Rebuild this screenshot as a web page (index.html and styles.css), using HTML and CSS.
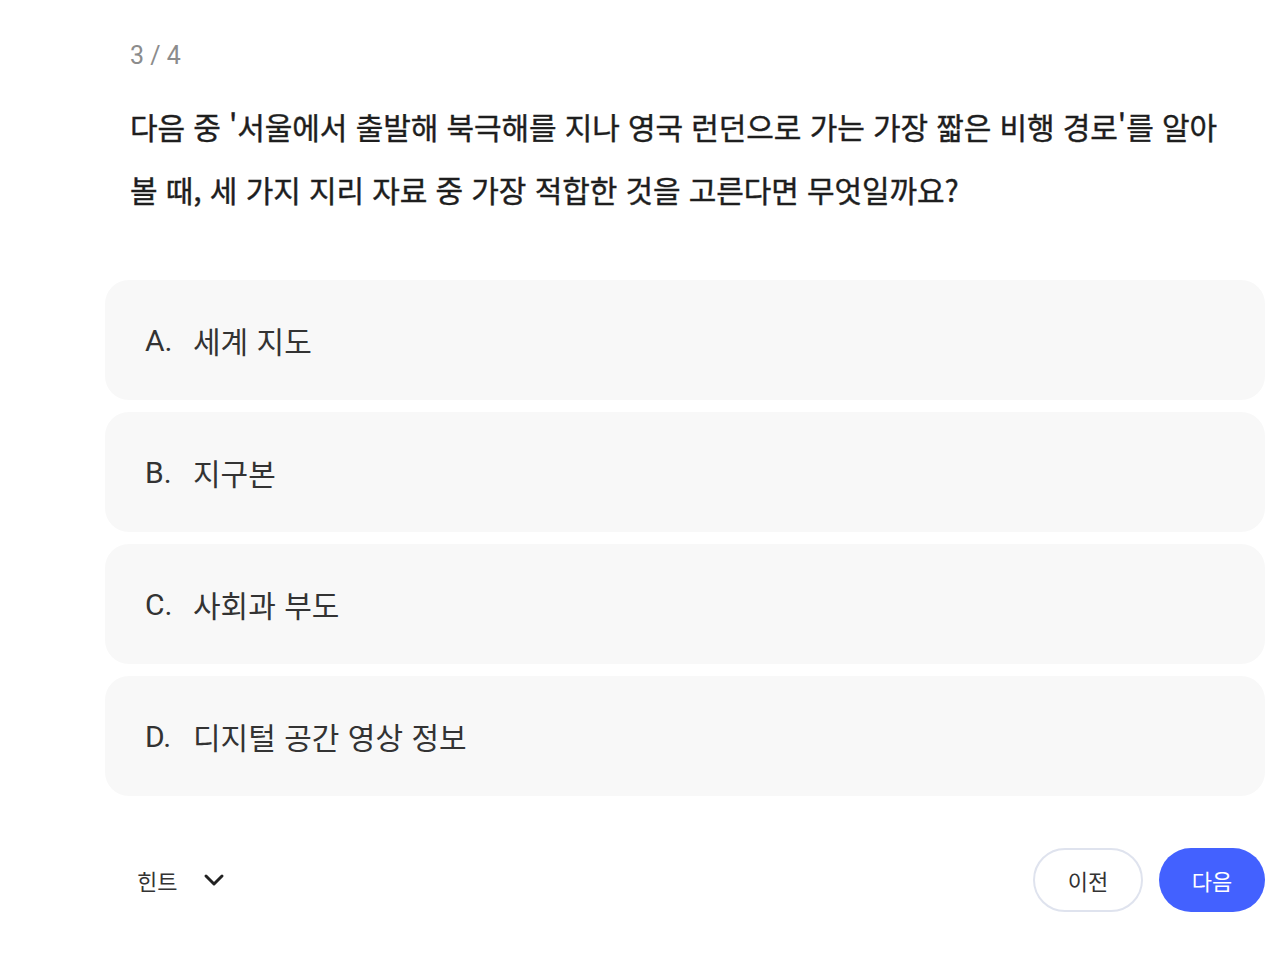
FILE: index.html
```html
<!DOCTYPE html>
<html lang="ko">
<head>
<meta charset="utf-8">
<link rel="stylesheet" href="styles.css">
</head>
<body>
<main class="quiz">
  <div class="counter">3 / 4</div>
  <p class="question">다음 중 '서울에서 출발해 북극해를 지나 영국 런던으로 가는 가장 짧은 비행 경로'를 알아 볼 때, 세 가지 지리 자료 중 가장 적합한 것을 고른다면 무엇일까요?</p>
  <ul class="options">
    <li class="option"><span class="letter">A.</span><span>세계 지도</span></li>
    <li class="option"><span class="letter">B.</span><span>지구본</span></li>
    <li class="option"><span class="letter">C.</span><span>사회과 부도</span></li>
    <li class="option"><span class="letter">D.</span><span>디지털 공간 영상 정보</span></li>
  </ul>
  <div class="footer">
    <button class="hint">힌트
      <svg class="chev" width="22" height="14" viewBox="0 0 22 14"><path d="M3 3 L11 11 L19 3" fill="none" stroke="#222" stroke-width="3" stroke-linecap="round" stroke-linejoin="round"/></svg>
    </button>
    <div class="nav">
      <button class="btn prev">이전</button>
      <button class="btn next">다음</button>
    </div>
  </div>
</main>
</body>
</html>
```
FILE: styles.css
```css
* { box-sizing: border-box; }
body {
  margin: 0;
  background: #fff;
  font-family: "Noto Sans CJK KR", "Noto Sans", sans-serif;
  color: #222;
}
.quiz {
  width: 1160px;
  margin-left: 105px;
  padding-top: 38px;
}
.counter {
  margin-left: 25px;
  font-family: Roboto, "Noto Sans CJK KR", sans-serif;
  font-size: 25px;
  line-height: 36px;
  color: #8c8c8c;
}
.question {
  margin: 21px 0 0 25px;
  width: 1108px;
  font-size: 30px;
  font-weight: 400;
  line-height: 63px;
  color: #1e1e1e;
  letter-spacing: -0.1px;
  -webkit-text-stroke: 0.4px #1e1e1e;
}
.options {
  list-style: none;
  margin: 59px 0 0;
  padding: 0;
  display: flex;
  flex-direction: column;
  gap: 12px;
}
.option {
  height: 120px;
  background: #f8f8f8;
  border-radius: 24px;
  display: flex;
  align-items: center;
  padding-left: 40px;
  font-size: 30px;
  color: #333;
}
.letter {
  width: 48px;
  font-family: Roboto, "Noto Sans CJK KR", sans-serif;
}
.footer {
  margin-top: 52px;
  display: flex;
  justify-content: space-between;
  align-items: center;
}
.hint {
  border: none;
  background: none;
  font-family: inherit;
  font-size: 22px;
  color: #333;
  padding: 0 0 0 32px;
  display: flex;
  align-items: center;
  gap: 26px;
}
.nav { display: flex; gap: 16px; }
.btn {
  height: 64px;
  border-radius: 32px;
  font-family: inherit;
  font-size: 22px;
}
.prev {
  width: 110px;
  background: #fff;
  border: 2px solid #dfe3ee;
  color: #333;
}
.next {
  width: 106px;
  background: #4361ff;
  border: none;
  color: #fff;
}
```
